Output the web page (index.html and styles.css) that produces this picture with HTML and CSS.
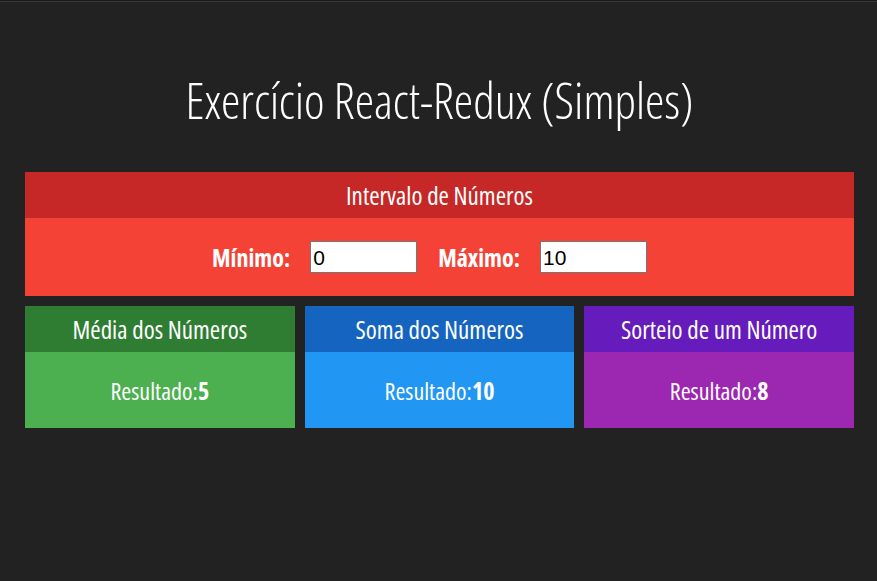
FILE: index.html
```html
<!DOCTYPE html>
<html lang="pt-BR">
<head>
<meta charset="utf-8">
<title>Exercício React-Redux (Simples)</title>
<link rel="stylesheet" href="styles.css">
</head>
<body>
<div class="app">
  <h1 class="title">Exercício React-Redux (Simples)</h1>
  <div class="card card-red">
    <div class="card-header">Intervalo de Números</div>
    <div class="card-body interval">
      <span class="label">Mínimo:</span>
      <input class="num" type="text" value="0">
      <span class="label">Máximo:</span>
      <input class="num" type="text" value="10">
    </div>
  </div>
  <div class="cards">
    <div class="card card-green">
      <div class="card-header">Média dos Números</div>
      <div class="card-body result"><span>Resultado:</span><strong>5</strong></div>
    </div>
    <div class="card card-blue">
      <div class="card-header">Soma dos Números</div>
      <div class="card-body result"><span>Resultado:</span><strong>10</strong></div>
    </div>
    <div class="card card-purple">
      <div class="card-header">Sorteio de um Número</div>
      <div class="card-body result"><span>Resultado:</span><strong>8</strong></div>
    </div>
  </div>
</div>
</body>
</html>
```
FILE: styles.css
```css
html, body {
  margin: 0;
  padding: 0;
  background: #222222;
}
body {
  border-top: 1px solid #191919;
  font-family: "Open Sans", sans-serif;
  font-stretch: condensed;
  color: #fff;
}
.app {
  border-top: 1px solid #383838;
  padding: 0 23px 0 25px;
  min-height: 579px;
  box-sizing: border-box;
}
.title {
  margin: 74px 0 48px;
  font-weight: 300;
  font-size: 49px;
  line-height: 48px;
  letter-spacing: 0;
  text-align: center;
}
.card {
  display: flex;
  flex-direction: column;
}
.card-header {
  height: 46px;
  display: flex;
  align-items: center;
  justify-content: center;
  font-size: 25px;
  font-weight: 400;
}
.card-body {
  display: flex;
  align-items: center;
  justify-content: center;
}
.card-red .card-header { background: #c62828; }
.card-red .card-body { background: #f44336; }
.card-green .card-header { background: #2e7d32; }
.card-green .card-body { background: #4caf50; }
.card-blue .card-header { background: #1565c0; }
.card-blue .card-body { background: #2196f3; }
.card-purple .card-header { background: #661bbc; }
.card-purple .card-body { background: #9c27b0; }

.interval {
  height: 78px;
  gap: 20px;
  padding-right: 20px;
}
.label {
  font-weight: 700;
  font-size: 24px;
}
.label + .num + .label { margin-left: 1px; }
.num {
  display: block;
  width: 107px;
  height: 32px;
  box-sizing: border-box;
  border: 1px solid #767676;
  border-radius: 0;
  padding: 2px 2px 0;
  font-family: "Liberation Sans", Arial, sans-serif;
  font-size: 21px;
  line-height: 28px;
  color: #000;
  background: #fff;
  margin: 0;
  outline: none;
}
.cards {
  margin-top: 10px;
  display: grid;
  grid-template-columns: repeat(3, 1fr);
  gap: 10px;
}
.result {
  height: 76px;
  font-size: 24px;
}
.result strong { font-weight: 700; }
```
